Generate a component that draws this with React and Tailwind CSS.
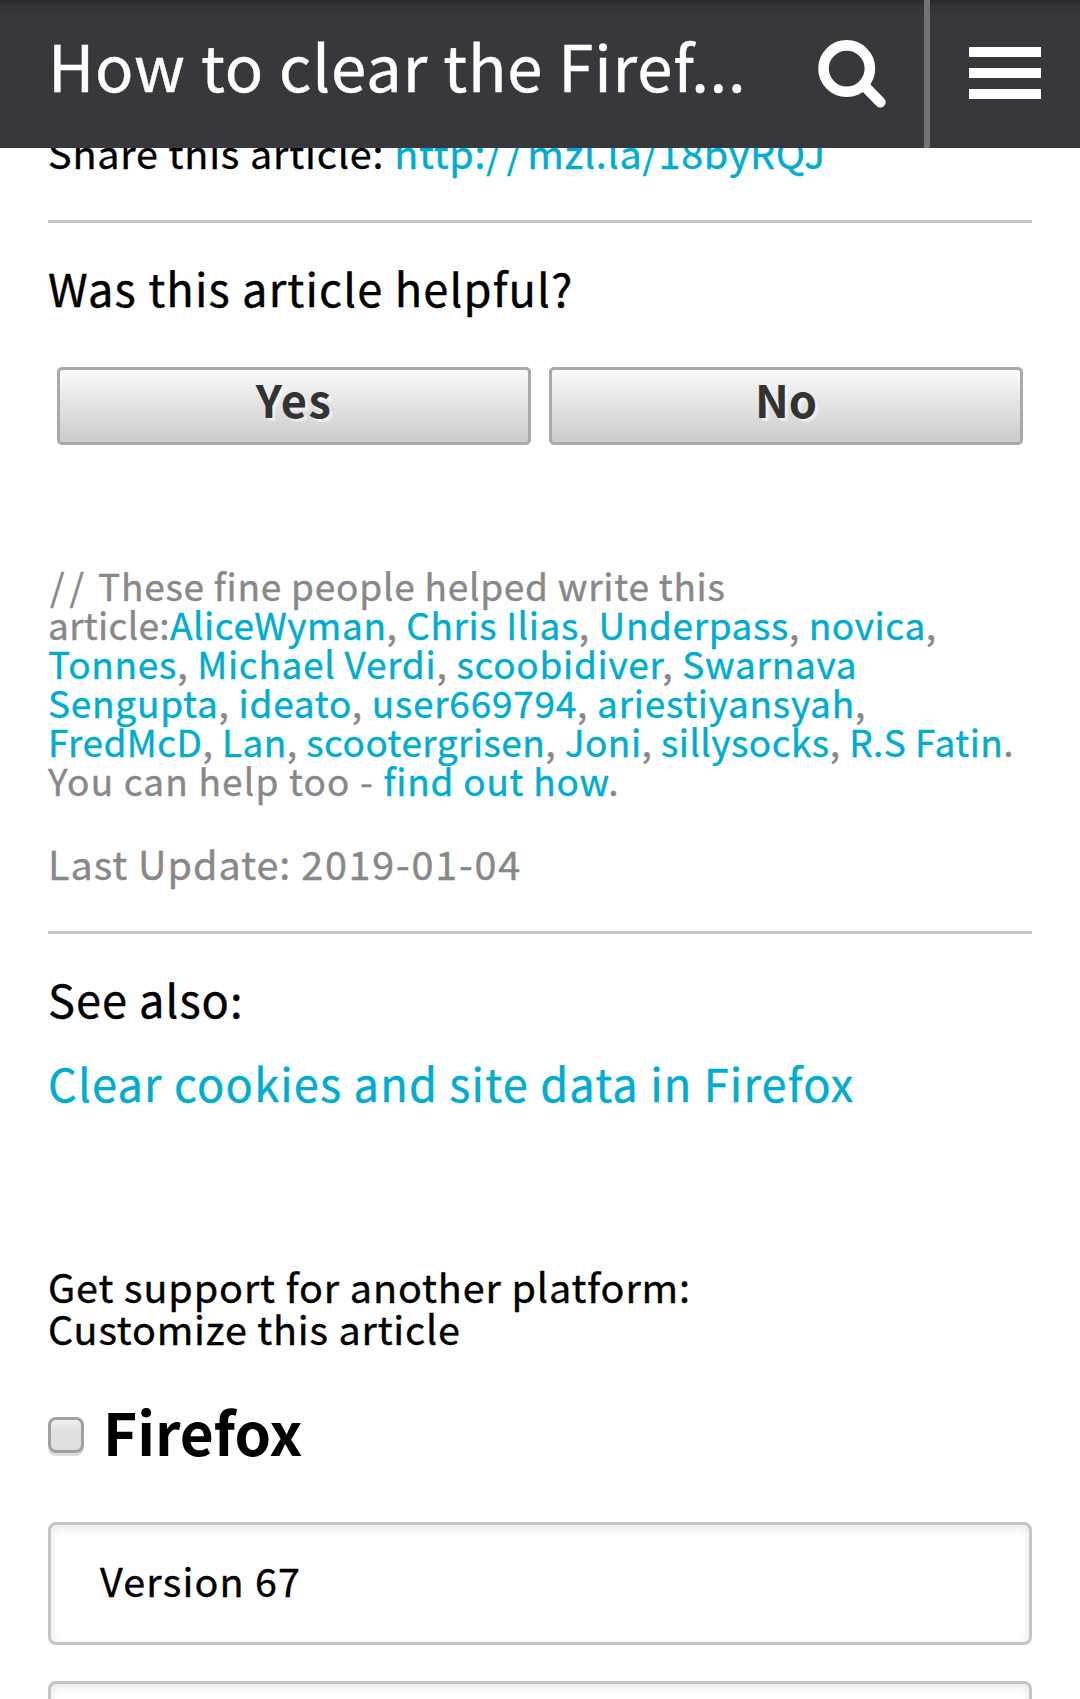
import React from "react";

function Link({ children, className = "" }) {
  return (
    <a href="#" className={`text-[#00acd0] ${className}`}>
      {children}
    </a>
  );
}

function Names({ names, end = "," }) {
  return names.map((name, i) => (
    <React.Fragment key={name}>
      <Link>{name}</Link>
      {i < names.length - 1 ? ", " : end}
    </React.Fragment>
  ));
}

function SearchIcon() {
  return (
    <svg className="ml-auto h-[70px] w-[70px] shrink-0" viewBox="0 0 70 70" fill="none" stroke="white">
      <circle cx="29.7" cy="30.6" r="23.2" strokeWidth="10.6" />
      <path d="M48.5 49 L63.4 64.3" strokeWidth="10.6" strokeLinecap="round" />
    </svg>
  );
}

function Header() {
  return (
    <header className="relative z-10 flex h-[148px] bg-[#38373b] bg-linear-to-b from-[#28262d] via-[#333237] via-[6px] to-[#38373b] to-[15px]">
      <div className="flex w-[924px] pl-12 pr-[37px]">
        <h1 className="mt-6 text-[63.5px] leading-[80px] tracking-[0.82px] text-white">
          How to clear the Firef...
        </h1>
        <div className="ml-auto mt-[38px]">
          <SearchIcon />
        </div>
      </div>
      <div className="w-1.5 bg-[#737276]" />
      <button className="ml-[39px] mt-[47px] flex h-[52px] w-[72px] flex-col justify-between">
        <span className="h-[10px] w-full bg-white" />
        <span className="h-[10px] w-full bg-white" />
        <span className="h-[10px] w-full bg-white" />
      </button>
    </header>
  );
}

function VoteButton({ children, className = "" }) {
  return (
    <button
      className={`flex h-[78px] flex-1 justify-center rounded-[5px] border-[3px] border-[#a9a9a9] bg-linear-to-b from-[#fafafa] to-[#cbcbcb] pt-[5px] text-[45.2px] leading-[48px] font-bold text-[#333] [-webkit-text-stroke:0px] [text-shadow:3px_3px_0_rgba(255,255,255,0.5)] ${className}`}
    >
      {children}
    </button>
  );
}

export default function App() {
  return (
    <div className="h-[1699px] w-[1080px] overflow-hidden bg-white font-['Noto_Sans_CJK_SC','Noto_Sans',sans-serif] whitespace-nowrap text-black [-webkit-text-stroke:0.4px]">
      <Header />
      <main className="-mt-[17px] flex flex-col px-12">
        <p className="text-[39.5px] leading-[42px] tracking-[0.86px]">
          Share this article:
          <Link className="ml-[10px] tracking-[0.7px]">
            http:<span className="tracking-[5px]">//</span>mzl.la/18byRQJ
          </Link>
        </p>
        <hr className="mt-[47px] border-t-[3px] border-[#c5c5c5]" />

        <h2 className="mt-[41px] text-[45.2px] leading-[48px] tracking-[1.15px]">Was this article helpful?</h2>
        <div className="mt-[55px] flex gap-[18px] px-[9px]">
          <VoteButton className="tracking-[1.5px]">Yes</VoteButton>
          <VoteButton>No</VoteButton>
        </div>

        <div className="mt-[121px] text-[37px] leading-[39px] text-[#888]">
          <p className="pl-0.5 tracking-[0.75px]">
            <span className="tracking-[5px]">//</span> These fine people helped write this
          </p>
          <p className="tracking-[0.6px]">
            <span className="tracking-[0.3px]">article:</span>
            <Names names={["AliceWyman", "Chris Ilias", "Underpass", "novica"]} />
          </p>
          <p className="tracking-[0.72px]">
            <Names names={["Tonnes", "Michael Verdi", "scoobidiver", "Swarnava"]} end="" />
          </p>
          <p className="tracking-[0.74px]">
            <Names names={["Sengupta", "ideato", "user669794", "ariestiyansyah"]} />
          </p>
          <p className="tracking-[0.45px]">
            <Names names={["FredMcD", "Lan", "scootergrisen", "Joni", "sillysocks", "R.S Fatin"]} end="." />
          </p>
          <p className="tracking-[0.75px]">
            <span className="tracking-[1.15px]">You can help too - </span>
            <Link>find out how</Link>.
          </p>
        </div>
        <p className="mt-[42px] text-[39.5px] leading-[42px] tracking-[1px] text-[#888]">
          Last Update: <span className="tracking-[1.8px]">2019-01-04</span>
        </p>
        <hr className="mt-[47px] border-t-[3px] border-[#c5c5c5]" />

        <h2 className="mt-[41px] text-[45.2px] leading-[48px] tracking-[1px]">See also:</h2>
        <p className="mt-9 text-[45.2px] leading-[48px] tracking-[1.15px]">
          <Link>Clear cookies and site data in Firefox</Link>
        </p>

        <div className="mt-[158px] text-[39.5px] leading-[42px]">
          <p className="tracking-[0.9px]">Get support for another platform:</p>
          <p className="tracking-[0.82px]">Customize this article</p>
        </div>

        <label className="mt-[50px] flex h-[62px]">
          <span className="mt-[18px] h-9 w-9 rounded-[8px] border-[3px] border-[#a0a0a0] bg-linear-to-b from-[#f0f0f0] via-[#dfdfdf] via-40% to-[#dfdfdf] shadow-[0_3px_0_#dedede]" />
          <span className="ml-[19px] mt-px text-[58.5px] leading-[62px] font-bold [-webkit-text-stroke:0px]">Firefox</span>
        </label>

        <div className="mt-[61px] h-[123px] rounded-[8px] border-[3px] border-[#c5c5c5] pt-[34px] pl-[49px] text-[39.5px] leading-[42px] tracking-[1.2px] shadow-[inset_0_3px_9px_rgba(0,0,0,0.1)]">
          Version 67
        </div>
        <div className="mt-9 h-[123px] rounded-[8px] border-[3px] border-[#c5c5c5] shadow-[inset_0_3px_9px_rgba(0,0,0,0.1)]" />
      </main>
    </div>
  );
}
